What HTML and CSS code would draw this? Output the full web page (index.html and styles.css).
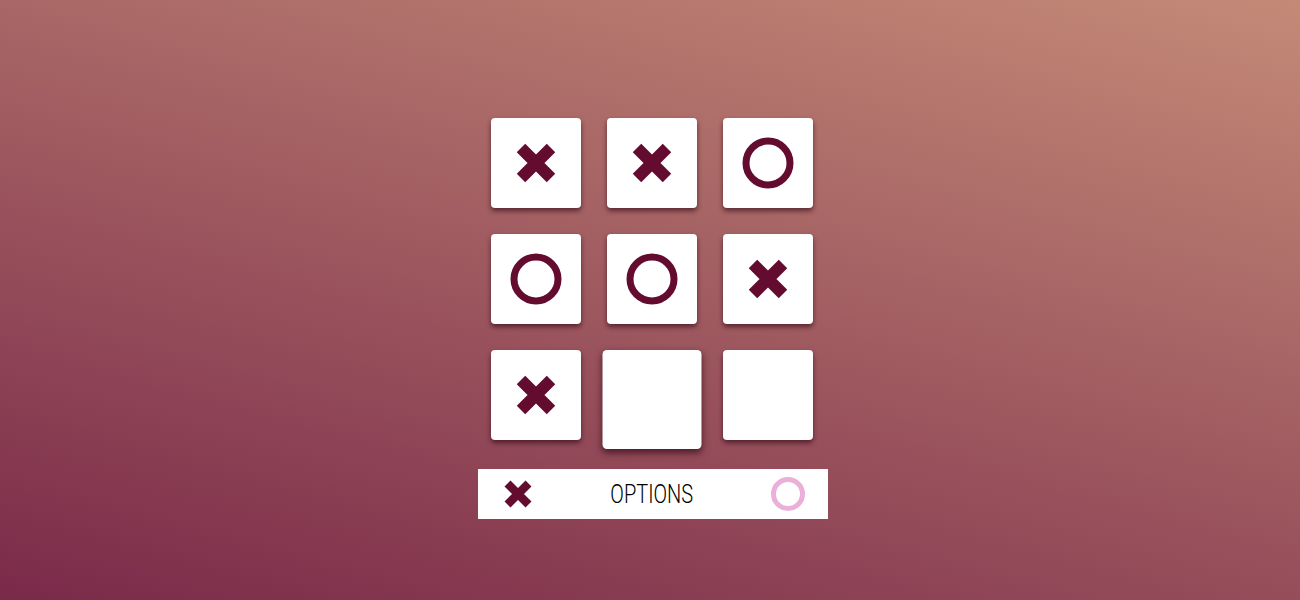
FILE: index.html
```html
<!DOCTYPE html>
<html>
<head>
<meta charset="utf-8">
<title>Tic Tac Toe</title>
<link rel="stylesheet" href="styles.css">
</head>
<body>
<main class="game">
  <div class="board">
    <div class="tile"><svg class="mark-x" viewBox="0 0 40 40"><path d="M5 5 L35 35 M35 5 L5 35"/></svg></div>
    <div class="tile"><svg class="mark-x" viewBox="0 0 40 40"><path d="M5 5 L35 35 M35 5 L5 35"/></svg></div>
    <div class="tile"><svg class="mark-o" viewBox="0 0 52 52"><circle cx="26" cy="26" r="22"/></svg></div>
    <div class="tile"><svg class="mark-o" viewBox="0 0 52 52"><circle cx="26" cy="26" r="22"/></svg></div>
    <div class="tile"><svg class="mark-o" viewBox="0 0 52 52"><circle cx="26" cy="26" r="22"/></svg></div>
    <div class="tile"><svg class="mark-x" viewBox="0 0 40 40"><path d="M5 5 L35 35 M35 5 L5 35"/></svg></div>
    <div class="tile"><svg class="mark-x" viewBox="0 0 40 40"><path d="M5 5 L35 35 M35 5 L5 35"/></svg></div>
    <div class="tile tile-lifted"></div>
    <div class="tile"></div>
  </div>
  <div class="options">
    <svg class="opt-x" viewBox="0 0 40 40"><path d="M5 5 L35 35 M35 5 L5 35"/></svg>
    <span class="options-label">OPTIONS</span>
    <svg class="opt-o" viewBox="0 0 34 34"><circle cx="17" cy="17" r="14.5"/></svg>
  </div>
</main>
</body>
</html>
```
FILE: styles.css
```css
html, body {
  margin: 0;
  padding: 0;
  height: 100%;
}
body {
  background: linear-gradient(15deg, #7a2a49 0%, #c48a77 100%);
  font-family: Roboto, "Liberation Sans", sans-serif;
  overflow: hidden;
}
.game {
  display: flex;
  flex-direction: column;
  align-items: center;
  padding-top: 118px;
  padding-left: 4px;
  gap: 29px;
}
.board {
  display: grid;
  grid-template-columns: repeat(3, 90px);
  grid-auto-rows: 90px;
  gap: 26px;
}
.tile {
  background: #fff;
  border-radius: 4px;
  box-shadow: 0 3px 5px rgba(40, 0, 15, 0.6);
  display: flex;
  align-items: center;
  justify-content: center;
}
.tile-lifted {
  transform: scale(1.1);
  transform-origin: top center;
  box-shadow: 0 3px 7px rgba(40, 0, 15, 0.65);
}
.mark-x {
  width: 40px;
  height: 40px;
  margin-top: -1px;
}
.mark-x path, .opt-x path {
  stroke: #640b30;
  stroke-width: 12;
  fill: none;
}
.mark-o {
  width: 52px;
  height: 52px;
  margin-top: -1px;
}
.mark-o circle {
  fill: none;
  stroke: #640b30;
  stroke-width: 7;
}
.options {
  width: 350px;
  height: 50px;
  box-sizing: border-box;
  background: #fff;
  display: flex;
  align-items: center;
  justify-content: space-between;
  padding: 0 23px 0 26px;
  margin-left: 2px;
}
.opt-x {
  width: 28px;
  height: 28px;
}
.opt-o {
  width: 34px;
  height: 34px;
}
.opt-o circle {
  fill: none;
  stroke: #ebb0d9;
  stroke-width: 5;
}
.options-label {
  display: inline-block;
  font-size: 25px;
  font-weight: 300;
  color: #000;
  transform: scaleX(0.8);
  margin: 0 -6px 0 -6px;
}
```
